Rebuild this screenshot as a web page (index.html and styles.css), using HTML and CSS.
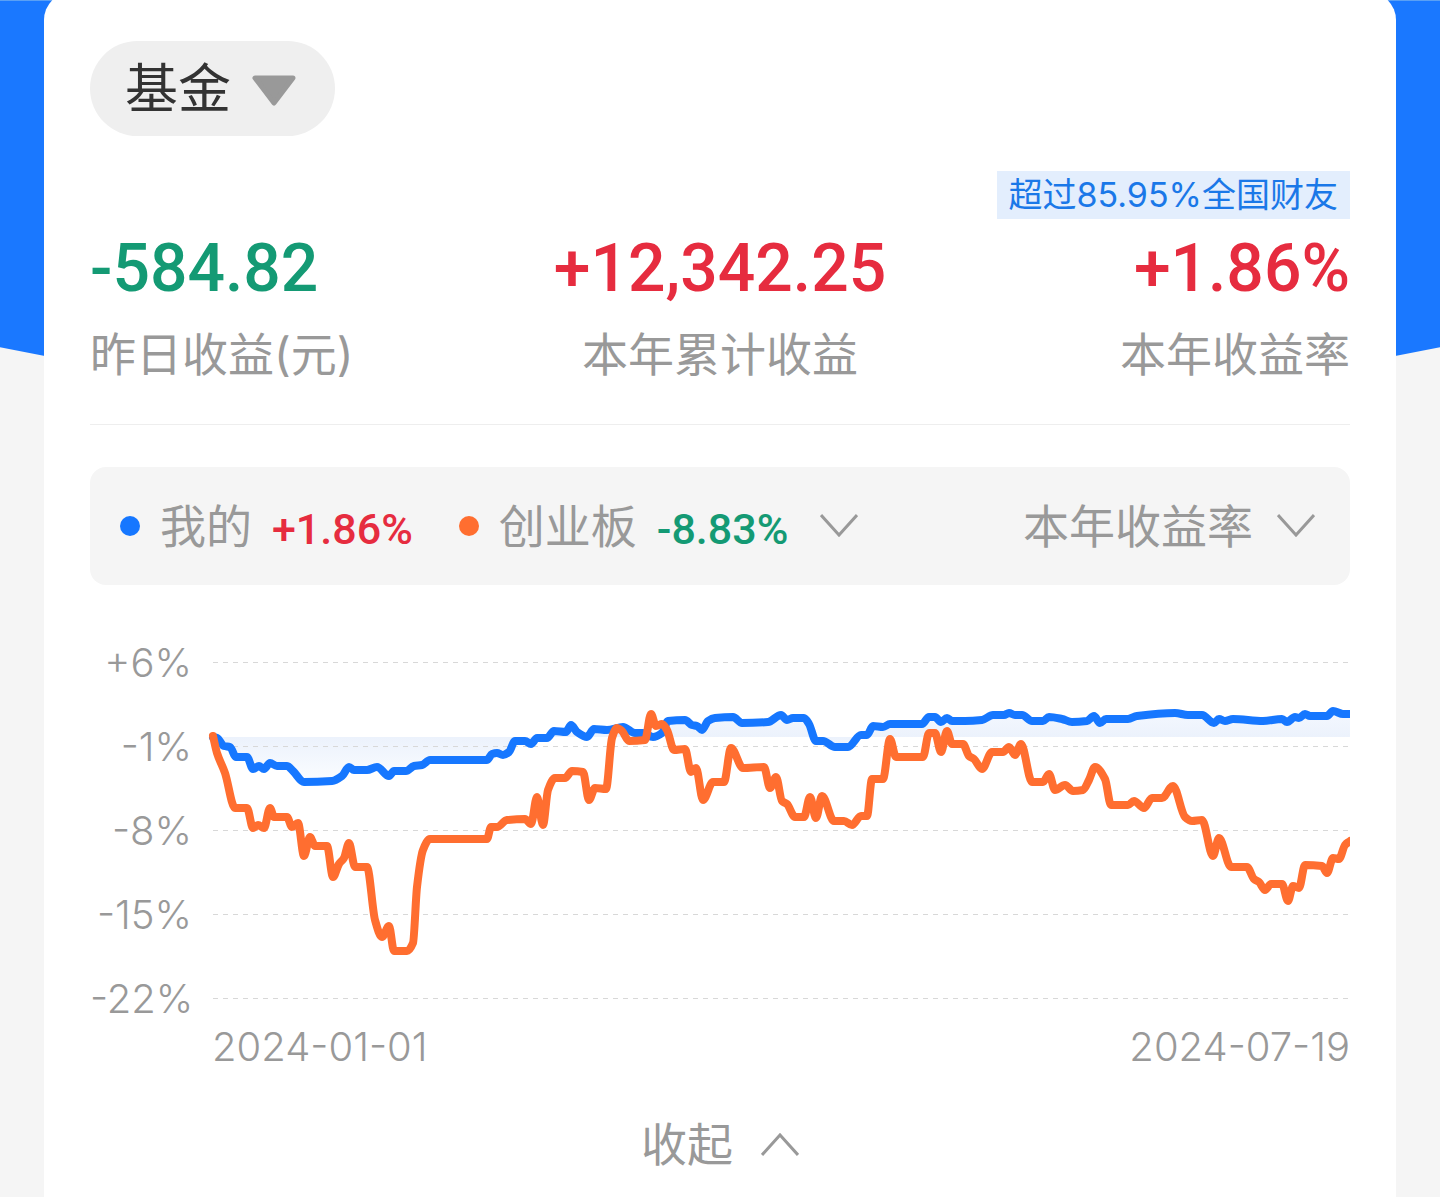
FILE: index.html
```html
<!DOCTYPE html>
<html lang="zh-CN">
<head>
<meta charset="utf-8">
<meta name="viewport" content="width=device-width, initial-scale=1">
<title>基金收益</title>
<link rel="stylesheet" href="styles.css">
</head>
<body>
<svg class="backdrop" viewBox="0 0 1440 400" preserveAspectRatio="none" aria-hidden="true">
  <path d="M0 0H1440V347L1390 357Q720 470 50 357L0 347Z" fill="#1a78ff"/>
</svg>
<main class="card">
  <div class="picker">
    <select class="picker-select" aria-label="资产类型"><option>基金</option></select>
    <svg class="picker-arrow" width="46" height="36" viewBox="0 0 46 36" aria-hidden="true"><path d="M4 7H42L23 32Z" fill="#999" stroke="#999" stroke-width="5" stroke-linejoin="round"/></svg>
  </div>

  <section class="stats" aria-label="收益概览">
    <div class="stat">
      <div class="stat-value down">-584.82</div>
      <div class="stat-label">昨日收益(元)</div>
    </div>
    <div class="stat stat-center">
      <div class="stat-value up">+12,342.25</div>
      <div class="stat-label">本年累计收益</div>
    </div>
    <div class="stat stat-right">
      <div class="badge">超过85.95%全国财友</div>
      <div class="stat-value up">+1.86%</div>
      <div class="stat-label">本年收益率</div>
    </div>
  </section>

  <section class="legend" aria-label="图例">
    <div class="series">
      <span class="dot dot-mine"></span>
      <span>我的</span>
      <span class="series-value up">+1.86%</span>
    </div>
    <div class="series">
      <span class="dot dot-index"></span>
      <select class="plain-select" aria-label="对比指数"><option>创业板</option></select>
      <span class="series-value down">-8.83%</span>
      <svg class="chevron series-chevron" width="38" height="24" viewBox="0 0 38 24" aria-hidden="true"><path d="M1 1L19 21L37 1"/></svg>
    </div>
    <div class="metric">
      <select class="plain-select metric-select" aria-label="指标"><option>本年收益率</option></select>
      <svg class="chevron metric-chevron" width="38" height="24" viewBox="0 0 38 24" aria-hidden="true"><path d="M1 1L19 21L37 1"/></svg>
    </div>
  </section>

  <section class="chart" aria-label="收益率走势">
    <div class="y-axis">
      <span>+6%</span><span>-1%</span><span>-8%</span><span>-15%</span><span>-22%</span>
    </div>
    <svg class="plot" viewBox="208 639 1142 384" preserveAspectRatio="none" role="img" aria-label="我的与创业板收益率曲线">
      <defs>
        <linearGradient id="shade" gradientUnits="userSpaceOnUse" x1="0" y1="710" x2="0" y2="782">
          <stop offset="0" stop-color="#f4f8ff"/>
          <stop offset="0.38" stop-color="#ecf2fc"/>
          <stop offset="1" stop-color="#fbfdff"/>
        </linearGradient>
      </defs>
      <path id="area" fill="url(#shade)"/>
      <path class="grid-line" d="M213 662.5H1350M213 746.5H1350M213 830.5H1350M213 914.5H1350M213 998.5H1350"/>
      <path id="mine" class="line line-mine"/>
      <path id="index" class="line line-index"/>
    </svg>
    <div class="x-axis"><span>2024-01-01</span><span>2024-07-19</span></div>
  </section>

  <button class="collapse" type="button">
    收起
    <svg class="chevron" width="38" height="24" viewBox="0 0 38 24" aria-hidden="true"><path d="M1 23L19 3L37 23"/></svg>
  </button>
</main>
<script src="chart.js"></script>
</body>
</html>
```
FILE: styles.css
```css
* { box-sizing: border-box; }

body {
  margin: 0;
  background: #f5f5f5;
  color: #999;
  font-family: Inter, "Noto Sans CJK SC", sans-serif;
  font-size: 46px;
  font-weight: 400;
  line-height: 60px;
  overflow-x: hidden;
}

.backdrop {
  position: absolute;
  top: 0;
  left: 0;
  width: 100%;
  height: 400px;
  z-index: -1;
  border-top: 1px solid #5aa0f5;
}

.card {
  display: flow-root;
  margin: -8px 44px 0;
  padding: 49px 46px 28px;
  border-radius: 28px 28px 0 0;
  background: #fff;
}

select, button {
  appearance: none;
  margin: 0;
  padding: 0;
  border: 0;
  background: none;
  color: inherit;
  font: inherit;
}

.picker {
  display: inline-grid;
  align-items: center;
  vertical-align: top;
}

.picker-select {
  grid-area: 1 / 1;
  height: 95px;
  padding: 0 104px 0 35px;
  border-radius: 48px;
  background: #efefef;
  color: #333;
  font-size: 53px;
}

.picker-arrow {
  grid-area: 1 / 1;
  justify-self: end;
  margin-right: 38px;
  pointer-events: none;
}

.stats {
  display: grid;
  grid-template-columns: 1fr auto 1fr;
  align-items: end;
  margin-top: 35px;
  padding-bottom: 40px;
  border-bottom: 1px solid #eee;
}

.stat-center { text-align: center; }

.stat-right {
  display: flex;
  flex-direction: column;
  align-items: flex-end;
}

.stat-value {
  font-family: Roboto, sans-serif;
  font-size: 66px;
  font-weight: 500;
  line-height: 100px;
}

.stat-label { margin-top: 5px; }

.up { color: #e62c3f; }
.down { color: #149a74; }

.badge {
  padding: 0 12px;
  background: #e3eefd;
  color: #1a78e8;
  font-size: 34px;
  line-height: 48px;
}

.legend {
  display: flex;
  align-items: center;
  gap: 46px;
  height: 118px;
  margin-top: 42px;
  padding: 0 35px 0 30px;
  border-radius: 16px;
  background: #f5f5f5;
}

.series {
  display: flex;
  align-items: center;
  gap: 20px;
}

.series-value {
  padding-top: 6px;
  font-family: Roboto, sans-serif;
  font-size: 43px;
  font-weight: 500;
}

.dot {
  width: 20px;
  height: 20px;
  border-radius: 50%;
}

.dot-mine { background: #1677ff; }
.dot-index { background: #ff6e30; }

.chevron {
  fill: none;
  stroke: #999;
  stroke-width: 3;
}

.series-chevron { margin-left: 12px; }

.metric {
  display: grid;
  align-items: center;
  margin-left: auto;
}

.metric-select {
  grid-area: 1 / 1;
  padding-right: 62px;
}

.metric-chevron {
  grid-area: 1 / 1;
  justify-self: end;
  pointer-events: none;
}

.chart {
  display: grid;
  grid-template-columns: 102px 1fr;
  column-gap: 16px;
  margin-top: 54px;
  font-size: 40px;
  font-weight: 300;
  line-height: 48px;
}

.y-axis {
  display: flex;
  flex-direction: column;
  justify-content: space-between;
  text-align: right;
}

.plot {
  width: 100%;
  height: 384px;
}

.grid-line {
  fill: none;
  stroke: #d8d8d8;
  stroke-dasharray: 5 5;
}

.line {
  fill: none;
  stroke-width: 8;
  stroke-linecap: round;
  stroke-linejoin: round;
}

.line-mine { stroke: #1677ff; }
.line-index { stroke: #ff6e30; }

.x-axis {
  grid-column: 2;
  display: flex;
  justify-content: space-between;
  padding-left: 4px;
}

.collapse {
  display: flex;
  align-items: center;
  gap: 28px;
  margin: 43px auto 0;
}
```
FILE: chart.js
```js
const mine = [
  [213,737],[217,738],[224,746],[230,747],[236,757],[247,757],[253,769],[259,766],[264,769],[270,763],[277,766],[287,766],[293,771],[304,782],[332,781],[342,776],[349,767],[354,770],[367,770],[377,767],[389,776],[394,771],[406,771],[414,766],[422,765],[430,760],
  [487,760],[492,754],[497,753],[503,755],[509,752],[515,741],[525,741],[531,744],[537,738],[547,738],[554,731],[566,732],[571,725],[577,732],[587,737],[594,729],[607,730],[623,727],[635,733],[643,733],[653,737],[662,733],[668,721],[685,720],[692,725],[697,726],[702,730],[708,721],[715,718],[733,717],
  [742,723],[768,722],[781,715],[787,720],[793,718],[804,718],[809,724],[816,741],[823,741],[835,747],[848,747],[861,735],[867,735],[873,726],[883,727],[890,724],[922,724],[929,717],[935,717],[941,722],[947,718],[952,721],[965,721],[982,720],[993,715],[1004,715],[1009,713],[1015,715],
  [1022,715],[1032,721],[1043,721],[1049,717],[1062,719],[1072,722],[1087,721],[1094,716],[1100,723],[1106,719],[1128,719],[1137,716],[1175,713],[1188,715],[1202,715],[1214,723],[1219,719],[1225,721],[1233,719],[1263,721],[1282,719],[1287,722],[1295,717],[1299,718],[1305,714],[1310,716],[1327,716],[1333,711],[1343,714],[1350,714]
];

const index = [
  [213,736],[217,753],[225,773],[235,808],[247,808],[253,828],[258,825],[264,828],[270,808],[274,817],[287,817],[292,827],[298,823],[304,856],[310,837],[315,846],[327,846],[333,877],[339,864],[344,858],[349,843],[355,867],[367,867],[375,920],[382,937],[389,926],[394,951],[407,951],[413,943],[417,887],[423,850],[430,839],
  [487,839],[491,827],[497,827],[507,820],[525,819],[531,824],[537,797],[543,825],[548,790],[555,778],[565,778],[572,771],[583,772],[589,800],[595,788],[606,789],[612,738],[617,728],[622,731],[629,741],[645,740],[651,714],[656,726],[662,724],[667,730],[674,750],[685,749],[691,772],[696,768],[703,800],[713,782],[724,782],[731,748],
  [743,768],[764,767],[770,788],[776,777],[782,801],[787,804],[795,817],[804,817],[810,797],[816,818],[822,796],[834,821],[844,821],[852,825],[861,816],[867,816],[872,779],[883,779],[890,739],[896,757],[923,757],[929,733],[935,733],[941,752],[947,731],[952,744],[963,744],[969,756],[974,759],[982,769],[992,752],[1003,752],[1009,747],[1015,755],
  [1021,744],[1032,782],[1043,782],[1049,774],[1055,790],[1065,785],[1073,791],[1083,790],[1089,780],[1095,767],[1105,779],[1111,805],[1128,805],[1134,801],[1144,808],[1152,798],[1162,798],[1173,786],[1185,817],[1192,821],[1202,820],[1213,856],[1219,838],[1231,867],[1247,867],[1254,879],[1259,882],[1265,890],[1271,884],[1282,884],[1288,901],[1293,886],[1299,888],[1305,865],[1322,866],[1327,873],[1333,858],[1339,859],[1345,845],[1350,841]
];

// Monotone cubic interpolation: smooth between points, flat at every peak.
function smoothPath(points) {
  const last = points.length - 1;
  const slope = i => (points[i + 1][1] - points[i][1]) / (points[i + 1][0] - points[i][0]);
  const tangent = i => {
    if (i === 0) return slope(0);
    if (i === last) return slope(last - 1);
    const a = slope(i - 1);
    const b = slope(i);
    return a * b <= 0 ? 0 : 2 * a * b / (a + b);
  };
  let path = `M${points[0]}`;
  for (let i = 0; i < last; i++) {
    const [x0, y0] = points[i];
    const [x1, y1] = points[i + 1];
    const third = (x1 - x0) / 3;
    path += `C${x0 + third},${y0 + third * tangent(i)} ${x1 - third},${y1 - third * tangent(i + 1)} ${x1},${y1}`;
  }
  return path;
}

const minePath = smoothPath(mine);
document.getElementById('mine').setAttribute('d', minePath);
document.getElementById('index').setAttribute('d', smoothPath(index));
document.getElementById('area').setAttribute('d', `${minePath}V737H213Z`);
```
